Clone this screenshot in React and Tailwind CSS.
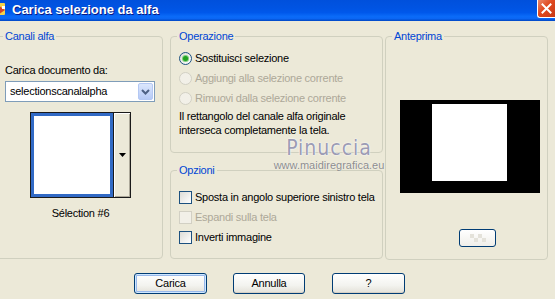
import React from 'react'

function Group({ title, className, legendClass = 'ml-[6px]', children }) {
  return (
    <fieldset className={`rounded-[4px] border border-[#D0D0BF] ${className}`}>
      <legend className={`px-[2px] leading-[13px] text-[#0046D5] ${legendClass}`}>{title}</legend>
      {children}
    </fieldset>
  )
}

function Radio({ checked, disabled }) {
  const box = disabled
    ? 'border-[#D2D0C4] bg-[#F2F0E8]'
    : 'border-[#1C5180] bg-[linear-gradient(135deg,#DCDCD7,#FFFFFF)]'
  return (
    <span className={`flex h-[13px] w-[13px] shrink-0 items-center justify-center rounded-full border ${box}`}>
      {checked && <span className="h-[5px] w-[5px] rounded-full bg-[#21A121] shadow-[0_0_0_1px_#7FD07F]" />}
    </span>
  )
}

function Check({ disabled }) {
  const box = disabled
    ? 'border-[#D2D0C4] bg-[#F2F0E8]'
    : 'border-[#1C5180] bg-[linear-gradient(135deg,#DCDCD7,#FFFFFF)]'
  return <span className={`h-[13px] w-[13px] shrink-0 border ${box}`} />
}

function Row({ control, label, disabled }) {
  return (
    <div className="flex h-[20px] items-center whitespace-nowrap">
      {control}
      <span className={`ml-[3px] ${disabled ? 'text-[#ACA899]' : ''}`}>{label}</span>
    </div>
  )
}

function XpButton({ label, isDefault, className }) {
  return (
    <button
      className={`flex h-[21px] items-center justify-center rounded-[3px] border border-[#003C74] bg-[linear-gradient(to_bottom,#FFFFFF,#F3F3EF_60%,#E3E1D8)] ${
        isDefault ? 'shadow-[inset_0_0_0_1px_#CEE7FF,inset_0_0_0_2px_#98B8EA]' : 'shadow-[inset_0_-1px_0_#D6D0C5]'
      } ${className}`}
    >
      {label}
    </button>
  )
}

export default function App() {
  return (
    <div className="relative h-[299px] w-[555px] overflow-hidden bg-[#ECE9D8] font-['Liberation_Sans',Arial,sans-serif] text-[11px] tracking-[-0.25px] text-black">
      {/* Title bar */}
      <div className="flex h-[21px] items-start bg-[linear-gradient(to_bottom,#0050DC_0%,#0054E3_40%,#0058EB_60%,#0A6BF8_78%,#0B67F5_88%,#0046C4_100%)]">
        <svg width="8" height="16" viewBox="0 0 8 16" className="mt-[2px] shrink-0">
          <rect x="-4" y="1" width="9" height="12" rx="1" fill="#F4D34B" />
          <path d="M-2 3 L5 8 L-2 13 Z" fill="#D6452A" />
          <rect x="2" y="4" width="3" height="3" fill="#FFFFFF" />
        </svg>
        <span className="ml-[4px] mt-[2px] text-[13px] font-bold leading-[16px] tracking-normal text-white [text-shadow:1px_1px_#0A1883]">
          Carica selezione da alfa
        </span>
        <div className="ml-auto flex h-[18px] w-[18px] items-center justify-center rounded-bl-[3px] border-b border-l border-white bg-[linear-gradient(135deg,#E98A6E,#E0481E_45%,#C83A16)]">
          <svg width="11" height="11" viewBox="0 0 11 11">
            <path d="M1.5 1.5 L9.5 9.5 M9.5 1.5 L1.5 9.5" stroke="#FFFFFF" strokeWidth="2" strokeLinecap="square" />
          </svg>
        </div>
      </div>

      {/* Body */}
      <div className="flex items-start pt-[9px]">
        <Group title="Canali alfa" legendClass="-ml-[2px]" className="-ml-[4px] h-[229px] w-[167px] shrink-0 pl-[8px]">
          <div className="mt-[20px] h-[14px] leading-[14px]">Carica documento da:</div>
          <div className="mt-[4px] flex h-[21px] w-[150px] items-center border border-[#7F9DB9] bg-white">
            <span className="flex-1 pl-[4px]">selectionscanalalpha</span>
            <span className="mr-[1px] flex h-[17px] w-[15px] items-center justify-center rounded-[2px] border border-[#B4C8F3] bg-[linear-gradient(to_bottom,#DCE7FD,#B6CAF6)]">
              <svg width="9" height="6" viewBox="0 0 9 6">
                <path d="M1 1 L4.5 4.5 L8 1" fill="none" stroke="#4D6185" strokeWidth="2" />
              </svg>
            </span>
          </div>
          <div className="ml-[25px] mt-[10px] flex h-[86px] w-[101px] border border-[#1A1A1A]">
            <div className="w-[82px] border-[3px] border-[#316AC5] bg-white" />
            <div className="flex flex-1 items-center justify-center border-l border-[#1A1A1A] bg-[#ECE9D8] shadow-[inset_1px_1px_#FFFFFF,inset_-1px_-1px_#ACA899]">
              <svg width="7" height="4" viewBox="0 0 7 4">
                <path d="M0 0 L7 0 L3.5 4 Z" fill="#000000" />
              </svg>
            </div>
          </div>
          <div className="mt-[8px] w-[151px] text-center leading-[14px]">Sélection #6</div>
        </Group>

        <div className="ml-[7px] flex w-[213px] shrink-0 flex-col">
          <Group title="Operazione" legendClass="-ml-[2px]" className="h-[123px] pl-[8px]">
            <div className="mt-[5px]">
              <Row control={<Radio checked />} label="Sostituisci selezione" />
              <Row control={<Radio disabled />} label="Aggiungi alla selezione corrente" disabled />
              <Row control={<Radio disabled />} label="Rimuovi dalla selezione corrente" disabled />
            </div>
            <p className="mt-[1px] whitespace-nowrap leading-[14px]">
              Il rettangolo del canale alfa originale
              <br />
              interseca completamente la tela.
            </p>
          </Group>
          <Group title="Opzioni" legendClass="-ml-[2px]" className="mt-[11px] h-[95px] pl-[8px]">
            <div className="mt-[10px]">
              <Row control={<Check />} label="Sposta in angolo superiore sinistro tela" />
              <Row control={<Check disabled />} label="Espandi sulla tela" disabled />
              <Row control={<Check />} label="Inverti immagine" />
            </div>
          </Group>
        </div>

        <Group title="Anteprima" className="ml-[2px] h-[230px] w-[163px] shrink-0">
          <div className="ml-[14px] mt-[57px] h-[93px] w-[140px] bg-black pl-[32px] pt-[4px]">
            <div className="h-[77px] w-[75px] bg-white" />
          </div>
          <div className="ml-[73px] mt-[36px] flex h-[18px] w-[37px] items-center justify-center rounded-[3px] border border-[#003C74] bg-[linear-gradient(to_bottom,#FFFFFF,#F0EFEA)]">
            <svg width="16" height="8" viewBox="0 0 16 8">
              <rect x="0" y="0" width="4" height="4" fill="#E4E2DA" />
              <rect x="8" y="0" width="4" height="4" fill="#E4E2DA" />
              <rect x="4" y="4" width="4" height="4" fill="#E4E2DA" />
              <rect x="12" y="4" width="4" height="4" fill="#E4E2DA" />
            </svg>
          </div>
        </Group>
      </div>

      {/* Buttons */}
      <div className="mt-[13px] flex pl-[134px]">
        <XpButton label="Carica" isDefault className="w-[73px]" />
        <XpButton label="Annulla" className="ml-[26px] w-[72px]" />
        <XpButton label="?" className="ml-[27px] w-[73px]" />
      </div>

      {/* Watermark */}
      <div className="pointer-events-none absolute left-[268px] top-[136px] w-[122px] text-center tracking-normal">
        <div className="font-['DejaVu_Sans_Condensed','DejaVu_Sans',sans-serif] text-[21px] leading-[24px] tracking-[1px] text-[#9C9CB4] [text-shadow:0_0_2px_#FFFFFF,0_0_1px_#FFFFFF]">
          Pinuccia
        </div>
        <div className="-mt-[1px] text-[11px] leading-[12px] text-[#8C8C8C] [text-shadow:0_0_1px_#FFFFFF]">
          www.maidiregrafica.eu
        </div>
      </div>
    </div>
  )
}
